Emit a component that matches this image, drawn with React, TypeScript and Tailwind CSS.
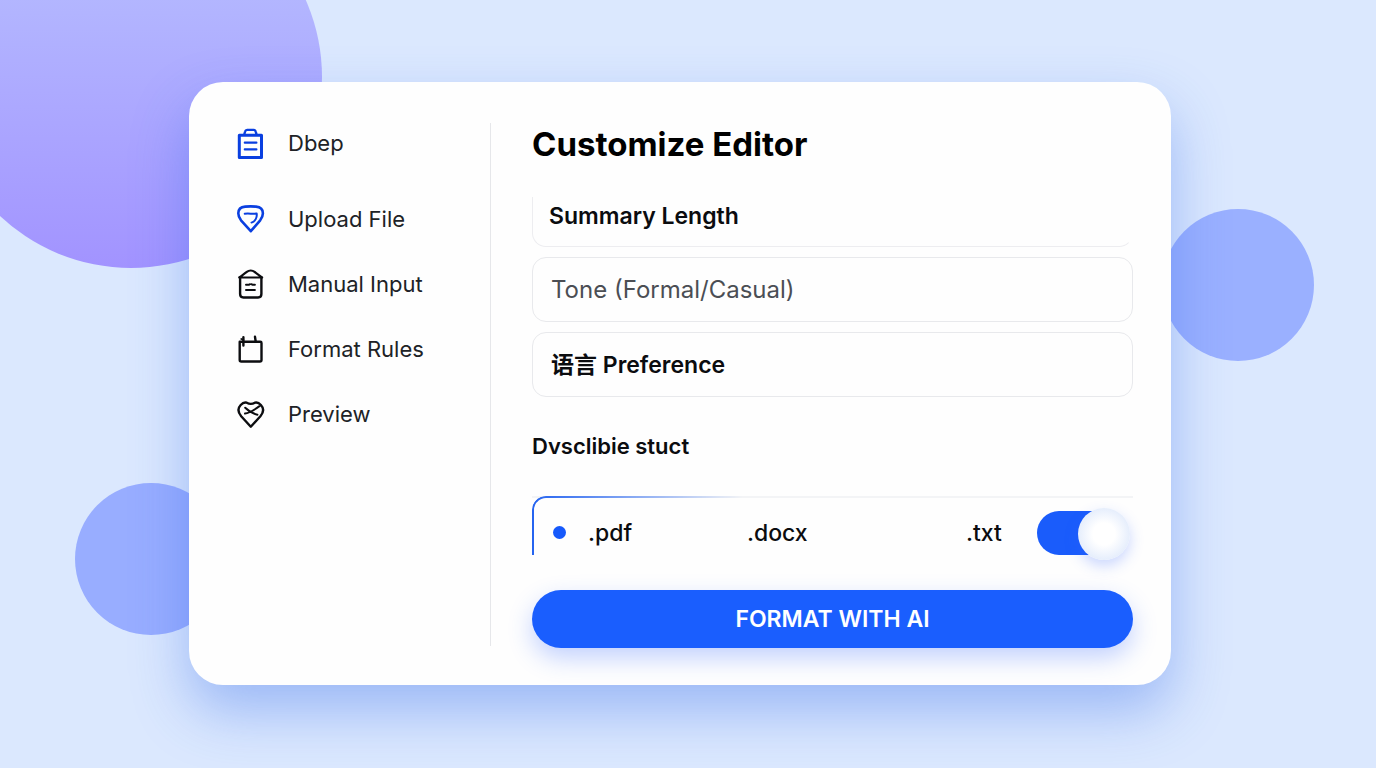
import type { ReactNode } from 'react';

type NavItem = { label: string; icon: ReactNode; accent?: boolean };

function Icon({ children }: { children: ReactNode }) {
  return (
    <svg
      viewBox="0 0 28 32"
      className="h-8 w-7 shrink-0 overflow-visible"
      fill="none"
      stroke="currentColor"
      strokeWidth="2.4"
      strokeLinecap="round"
      strokeLinejoin="round"
      aria-hidden="true"
    >
      {children}
    </svg>
  );
}

const navItems: NavItem[] = [
  {
    label: 'Dbep',
    accent: true,
    icon: (
      <Icon>
        <path d="M8.400 7 9.100 4.500c.3-1.200.9-1.600 2-1.600h6.600c1.100 0 1.700.4 2 1.600l.7 2.500" strokeWidth="2.400" />
        <path d="M3.300 8.200h22.200v22.300H3.300z" strokeWidth="3" />
        <path d="M8.800 15.700h11.600M8.800 22.400h11.600" strokeWidth="2.200" />
      </Icon>
    ),
  },
  {
    label: 'Upload File',
    accent: true,
    icon: (
      <Icon>
        <path d="M14.800 28.200 5 17.300C3.200 15 2.300 12.800 2.300 10.300c0-4 2.600-6.300 6.900-6.700 3.600-.3 7.200-.3 10.800 0 4.300.4 6.900 2.700 6.900 6.700 0 2.500-.9 4.700-2.700 7z" strokeWidth="2.600" />
        <path d="M8.700 10.700c3.900-.3 8.200.2 12-.1.500 3.700-1.400 8-5.200 9" strokeWidth="2" />
      </Icon>
    ),
  },
  {
    label: 'Manual Input',
    icon: (
      <Icon>
        <path d="M3.200 9.500c2.500-1.900 5.200-3.700 7.600-5.600 2.200-1.800 5.600-1.800 7.800 0 2.200 1.900 5 3.700 7.500 5.600z" strokeWidth="2.200" />
        <path d="M4.100 9.800v16.300c0 2.300 1 3.400 3.300 3.400h14.700c2.300 0 3.300-1.100 3.300-3.400V9.800" />
        <path d="M10 16.700h3.200l.9-.5M15.400 16.200l.9.5h2.600M10 22.100h8.900" strokeWidth="2" />
      </Icon>
    ),
  },
  {
    label: 'Format Rules',
    icon: (
      <Icon>
        <path d="M3.700 9v18c0 1 .6 1.500 1.600 1.500h18.600c1 0 1.600-.5 1.600-1.500V10c0-.8-.4-1.200-1.200-1.200H3.700" />
        <path d="M7.400 4.300v8.300M19 3.800l.6 4.200" />
        <path d="m5.300 6 2.100.8" strokeWidth="1.800" />
      </Icon>
    ),
  },
  {
    label: 'Preview',
    icon: (
      <Icon>
        <path d="M14.800 28.700 5.200 18.200C1.800 14.200 1.900 10 4.700 7c2-2.200 4.200-2.900 6-2.300 2.600 1.500 5.600 1.500 8.200 0 1.900-.6 4 .1 6 2.300 2.800 3 2.900 7.200-.5 11.200z" />
        <path d="M9.200 9.800c3.200 3 7.300 5.900 12.200 6.900M9 15.600c5.200-.6 9.600-4.100 14.600-7.400" strokeWidth="2" />
      </Icon>
    ),
  },
];

const fileTypes = ['.pdf', '.docx', '.txt'];

export default function App() {
  return (
    <main className="relative isolate flex min-h-screen flex-col justify-center overflow-hidden bg-[#dbe8fe] pr-[205px] pb-px pl-[189px] font-[Inter,'Noto_Sans_CJK_SC',sans-serif]">
      <div className="absolute -top-[114px] -left-[60px] -z-10 size-[382px] rounded-full bg-linear-to-b from-[#b4b8ff] from-25% to-[#a293ff]" />
      <div className="absolute top-[209px] left-[1162px] -z-10 size-[152px] rounded-full bg-[#9ab0ff]" />
      <div className="absolute top-[483px] left-[75px] -z-10 size-[152px] rounded-full bg-[#98adff]" />

      <div className="flex rounded-[34px] bg-[#fefefe] pt-[41px] pr-[38px] pb-[37px] shadow-[0_26px_56px_rgba(50,105,235,0.38)]">
        <nav className="mb-[2px] w-[302px] shrink-0 border-r border-[#e6e7ea] pl-[47px]" aria-label="Editor">
          <ul className="flex flex-col gap-[25px]">
            {navItems.map(({ label, icon, accent }) => (
              <li key={label} className="first:mb-[11px]">
                <a href="#" className="flex h-10 items-center gap-6 text-[22px] text-[#202226]">
                  <span className={accent ? 'text-[#0a3fe0]' : 'text-[#0c0d10]'}>{icon}</span>
                  {label}
                </a>
              </li>
            ))}
          </ul>
        </nav>

        <form className="flex min-w-0 flex-1 flex-col pl-[41px]" onSubmit={(e) => e.preventDefault()}>
          <h1 className="text-[33px] leading-[42px] font-bold text-black">Customize Editor</h1>

          <div className="mt-8 flex flex-col gap-[10px]">
            <input
              aria-label="Summary Length"
              placeholder="Summary Length"
              className="h-[50px] w-full rounded-b-[14px] border border-t-0 border-[#ededf0] border-r-transparent bg-transparent px-4 pb-[11px] text-[23px] font-semibold outline-none placeholder:text-[#0b0c0f] placeholder:opacity-100"
            />
            <input
              aria-label="Tone (Formal/Casual)"
              placeholder="Tone (Formal/Casual)"
              className="h-[65px] w-full rounded-[14px] border border-[#e8e9ec] bg-transparent px-[18px] text-[24px] outline-none placeholder:text-[#4b4e54] placeholder:opacity-100"
            />
            <input
              aria-label="语言 Preference"
              placeholder="语言 Preference"
              className="h-[65px] w-full rounded-[14px] border border-[#e8e9ec] bg-transparent px-[18px] text-[23px] font-semibold outline-none placeholder:text-[#0b0c0f] placeholder:opacity-100"
            />
          </div>

          <fieldset className="mt-[33px]">
            <legend className="text-[22px] leading-8 font-semibold text-[#0b0c0f]">Dvsclibie stuct</legend>
            <div className="relative mt-[34px] flex h-[59px] items-center border-t-2 border-[#f3f4f6] pt-3 pr-[3px] pl-[21px]">
              <div className="pointer-events-none absolute inset-0 -top-[2px] rounded-tl-[14px] border-t-2 border-l-2 border-[#2463f0] mask-r-from-0% mask-r-to-35%" />
              <div className="grid flex-1 grid-cols-[159fr_219fr_106fr]">
                {fileTypes.map((type) => (
                  <label key={type} className="flex items-center gap-[22px] text-[23px] leading-8 font-medium text-[#0b0c0f]">
                    <input
                      type="radio"
                      name="file-type"
                      defaultChecked={type === '.pdf'}
                      className="size-[13px] shrink-0 appearance-none rounded-full checked:bg-[#1659fb]"
                    />
                    {type}
                  </label>
                ))}
              </div>
              <label className="relative flex h-11 w-[93px] shrink-0">
                <input
                  type="checkbox"
                  role="switch"
                  aria-label="Enable format"
                  defaultChecked
                  className="h-11 w-[86px] appearance-none rounded-full bg-[#1a5cfb]"
                />
                <span className="absolute -top-[3px] right-0 size-[52px] rounded-full bg-[radial-gradient(circle,#ffffff_30%,#e6eefc_70%)] shadow-[0_6px_14px_rgba(50,100,255,0.25)]" />
              </label>
            </div>
          </fieldset>

          <button
            type="submit"
            className="mt-[35px] h-[58px] w-full rounded-full bg-[#1a5efe] text-[23px] font-semibold text-white shadow-[0_10px_24px_rgba(40,95,255,0.28)]"
          >
            FORMAT WITH AI
          </button>
        </form>
      </div>
    </main>
  );
}
